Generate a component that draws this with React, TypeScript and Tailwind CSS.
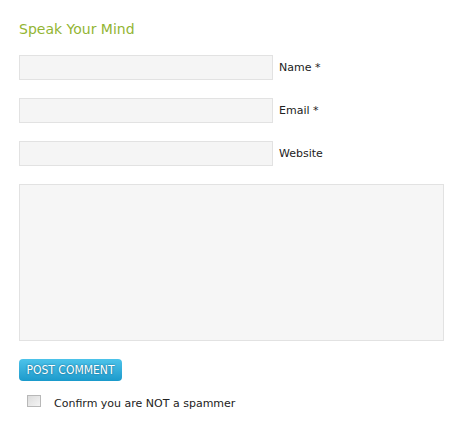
export default function App() {
  const fields = [
    { label: 'Name *', id: 'author' },
    { label: 'Email *', id: 'email' },
    { label: 'Website', id: 'url' },
  ];

  return (
    <div className="w-[458px] h-[421px] bg-white px-[19px] pt-[19px] font-['DejaVu_Sans',sans-serif] text-[#333]">
      <h3 className="text-[14px] leading-[20px] font-normal text-[#93b533]">Speak Your Mind</h3>

      <div className="mt-[16px] flex flex-col gap-[18px]">
        {fields.map((f) => (
          <div key={f.id} className="flex items-center gap-[6px]">
            <input
              id={f.id}
              type="text"
              className="w-[254px] h-[25px] bg-[#f5f5f5] border border-[#e2e2e2] outline-none"
            />
            <label htmlFor={f.id} className="pt-[2px] text-[11px] text-[#222]">
              {f.label}
            </label>
          </div>
        ))}
      </div>

      <textarea className="mt-[18px] block w-[425px] h-[157px] bg-[#f6f6f6] border border-[#e2e2e2] outline-none resize-none" />

      <button className="mt-[18px] block w-[103px] h-[22px] rounded-[4px] bg-gradient-to-b from-[#4cc3ea] to-[#1a9acb] text-[12px] leading-[22px] text-white uppercase font-['DejaVu_Sans_Condensed','Liberation_Sans_Narrow',sans-serif] [text-shadow:0_0_2px_#0b5d80]">
        Post Comment
      </button>

      <div className="mt-[14px] ml-[8px] flex items-start gap-[13px]">
        <span className="w-[14px] h-[12px] border border-[#b8b8b8] bg-gradient-to-br from-[#dcdcdc] to-[#f4f4f4]" />
        <span className="mt-[2px] leading-[14px] text-[11px] text-[#222]">Confirm you are NOT a spammer</span>
      </div>
    </div>
  );
}
